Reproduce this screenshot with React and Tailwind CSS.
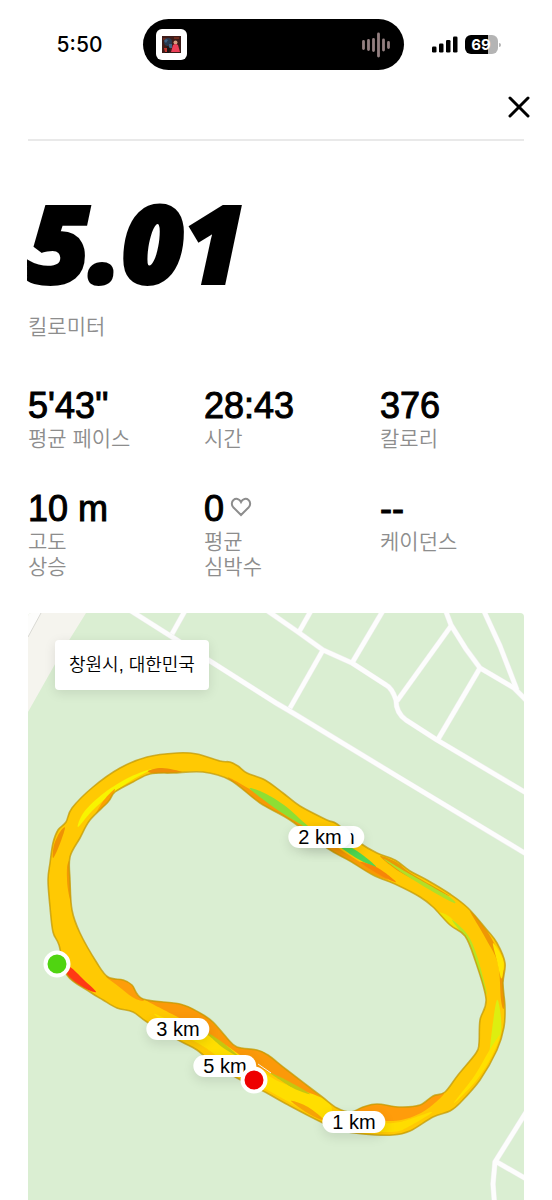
import { X } from "lucide-react";

const MAP = { x: 28, y: 613, width: 496, height: 587 };

const stats = [
  { value: "5'43''", label: ["평균 페이스"] },
  { value: "28:43", label: ["시간"] },
  { value: "376", label: ["칼로리"] },
  { value: "10 m", label: ["고도", "상승"] },
  { value: "0", label: ["평균", "심박수"], heart: true },
  { value: "--", label: ["케이던스"] },
];

const distancePins = [
  { text: "4 km", x: 333, y: 837 },
  { text: "2 km", x: 320, y: 837 },
  { text: "3 km", x: 178, y: 1029 },
  { text: "5 km", x: 225, y: 1066 },
  { text: "1 km", x: 354, y: 1122 },
];

const outerEdge = [
  [177, 753], [197, 754], [220, 761], [230, 762], [238, 766], [247, 773], [265, 780], [283, 793],
  [300, 806], [327, 820], [337, 824], [360, 843], [377, 853], [395, 860], [410, 871], [427, 880],
  [450, 894], [468, 908], [487, 930], [497, 943], [505, 963], [503, 983], [505, 1007], [504, 1027],
  [497, 1050], [480, 1080], [460, 1103], [450, 1111], [433, 1117], [410, 1131], [393, 1135],
  [363, 1134], [340, 1130], [321, 1122], [290, 1106], [263, 1091], [237, 1078], [216, 1066],
  [197, 1050], [180, 1041], [147, 1022], [133, 1012], [117, 1008], [103, 1000], [90, 992],
  [67, 975], [59, 945], [53, 932], [50, 907], [48, 880], [50, 863], [53, 843], [58, 830],
  [66, 822], [72, 808], [93, 787], [120, 768], [147, 757],
];

const innerEdge = [
  [173, 773], [203, 772], [230, 780], [260, 803], [290, 820], [327, 848], [350, 861], [373, 875],
  [397, 885], [420, 897], [433, 907], [450, 925], [465, 936], [475, 960], [486, 999], [480, 1020],
  [479, 1043], [476, 1053], [458, 1075], [445, 1092], [433, 1096], [420, 1105], [400, 1107],
  [377, 1104], [363, 1107], [351, 1112], [337, 1108], [321, 1096], [287, 1070], [268, 1055],
  [257, 1050], [237, 1047], [227, 1038], [213, 1022], [200, 1013], [180, 1004], [143, 999],
  [132, 985], [123, 980], [108, 977], [97, 963], [80, 933], [72, 910], [70, 880], [70, 857],
  [80, 838], [90, 820], [108, 802], [115, 792], [133, 782], [150, 774],
];

// pace changes along the track, drawn on top of the base colour
const paceAreas = [
  { color: "#f8f400", points: [[78, 827], [84, 812], [104, 793], [130, 777], [152, 769], [132, 780], [110, 795], [92, 811]] },
  { color: "#fba004", points: [[96, 814], [104, 800], [115, 789], [108, 803]] },
  { color: "#ef8d07", points: [[148, 771], [162, 768], [182, 772], [172, 774], [156, 774]] },
  { color: "#ef9204", points: [[53, 858], [54, 845], [60, 832], [65, 828], [59, 846]] },
  { color: "#f29a04", points: [[67, 868], [70, 861], [71, 880], [73, 908], [68, 890]] },
  { color: "#f79a06", points: [[228, 778], [246, 787], [284, 810], [328, 841], [352, 857], [388, 879], [368, 872], [330, 850], [290, 820], [260, 803]] },
  { color: "#8ede34", points: [[250, 789], [262, 792], [284, 805], [308, 826], [328, 841], [300, 824], [276, 809]] },
  { color: "#4fd852", points: [[338, 845], [350, 847], [364, 856], [376, 867], [358, 859]] },
  { color: "#f78508", points: [[360, 862], [378, 868], [396, 882], [380, 875]] },
  { color: "#e79a05", points: [[380, 856], [396, 862], [412, 874], [450, 896], [430, 887], [400, 872]] },
  { color: "#b1df27", points: [[384, 859], [408, 873], [448, 896], [454, 903], [430, 890], [404, 874]] },
  { color: "#f1e403", points: [[437, 912], [450, 917], [463, 933], [450, 924]] },
  { color: "#b7e425", points: [[452, 920], [467, 934], [477, 956], [487, 994], [480, 978], [471, 947], [463, 935]] },
  { color: "#ee9605", points: [[470, 911], [487, 931], [500, 957], [505, 983], [504, 1008], [501, 1000], [498, 964], [486, 939]] },
  { color: "#ffe600", points: [[493, 943], [503, 959], [503, 973], [501, 978], [497, 961]] },
  { color: "#ddee10", points: [[497, 1000], [501, 1018], [500, 1037], [490, 1056], [492, 1030]] },
  { color: "#ffe000", points: [[500, 1035], [492, 1056], [476, 1081], [454, 1103], [475, 1075], [489, 1051]] },
  { color: "#ff9c0b", points: [[432, 1097], [444, 1094], [421, 1113], [392, 1121], [358, 1116], [351, 1112], [376, 1104], [402, 1107], [421, 1104]] },
  { color: "#ffdd00", points: [[376, 1124], [400, 1122], [432, 1112], [408, 1127], [392, 1132], [354, 1130]] },
  { color: "#fd9d0a", points: [[106, 976], [123, 980], [133, 986], [144, 1000], [134, 998], [118, 986]] },
  { color: "#fb9909", points: [[144, 998], [180, 1003], [203, 1014], [218, 1028], [228, 1039], [238, 1047], [258, 1050], [269, 1055], [289, 1071], [321, 1098], [301, 1094], [276, 1076], [244, 1061], [223, 1046], [196, 1027], [172, 1014]] },
  { color: "#ffde00", points: [[154, 1014], [174, 1022], [209, 1036], [230, 1048], [252, 1064], [280, 1082], [322, 1098], [332, 1110], [322, 1119], [289, 1102], [259, 1085], [232, 1068], [206, 1048], [180, 1033]] },
  { color: "#c6c60f", points: [[206, 1032], [222, 1042], [238, 1056], [222, 1047]] },
  { color: "#c6c60f", points: [[270, 1073], [288, 1081], [310, 1094], [293, 1088]] },
  { color: "#f7a306", points: [[291, 1101], [308, 1107], [324, 1120], [309, 1114]] },
  { color: "#ff3914", points: [[62, 968], [70, 967], [84, 980], [96, 992], [82, 987], [66, 976]] },
];

const roads = [
  "M128 609 L210 661 L276 703 L288 710 L400 778 L528 855",
  "M262 607 L298 632 L323 650 L352 663 L386 685 Q392 688 396 700 Q396 713 406 720 L437 740 L528 794",
  "M186 609 L172 634",
  "M312 609 L299 632",
  "M323 650 L290 708",
  "M384 609 L352 663",
  "M445 609 L451 625 L466 649 L480 668 L514 688 L528 702",
  "M451 626 L397 701",
  "M480 668 L437 741",
  "M483 609 L500 646 L517 690",
  "M530 1106 L495 1162 L493 1184 L495 1210",
  "M495 1161 L530 1181",
];

// closed Catmull-Rom curve through the points
function curve(points) {
  const n = points.length;
  let d = `M${points[0][0]} ${points[0][1]}`;
  for (let i = 0; i < n; i++) {
    const [p0, p1, p2, p3] = [-1, 0, 1, 2].map((o) => points[(i + o + n) % n]);
    d += `C${p1[0] + (p2[0] - p0[0]) / 6} ${p1[1] + (p2[1] - p0[1]) / 6}`;
    d += ` ${p2[0] - (p3[0] - p1[0]) / 6} ${p2[1] - (p3[1] - p1[1]) / 6}`;
    d += ` ${p2[0]} ${p2[1]}`;
  }
  return d + "Z";
}

function place({ x, y }) {
  return {
    left: `${((x - MAP.x) / MAP.width) * 100}%`,
    top: `${((y - MAP.y) / MAP.height) * 100}%`,
  };
}

function StatusBar() {
  return (
    <div className="grid grid-cols-[1fr_auto_1fr] items-center pt-[19px] pr-[6px]">
      <div className="flex justify-end pr-10 font-['Inter',sans-serif] text-[21px] leading-6 font-medium">
        5:50
      </div>
      <div className="flex h-[51px] w-[261px] items-center justify-between rounded-full bg-black px-[13px]">
        <div className="flex size-[31px] items-center justify-center rounded-md bg-white">
          <svg viewBox="0 0 19 17" className="h-[17px] w-[19px]" aria-hidden="true">
            <rect width="19" height="17" fill="#3d1c19" />
            <path d="M1 2h7v2H1zM12 1h5v2h-5z" fill="#6e2a1c" />
            <circle cx="6" cy="6" r="4" fill="#27394f" />
            <path d="M2 5l2-2 2 1-2 3zM7 8h3v4H7z" fill="#3d6285" />
            <path d="M5 10l3 2-1 5H3z" fill="#1b1716" />
            <path d="M2 12h3v4H3z" fill="#c5342f" />
            <circle cx="13.500" cy="6.500" r="2" fill="#d79c80" />
            <path d="M11 9q2.500-2 5 0l2 7H9z" fill="#ec3f58" />
          </svg>
        </div>
        <svg viewBox="0 0 30 26" className="h-[26px] w-[30px]" aria-hidden="true">
          <g stroke="#937f80" strokeWidth="2.800" strokeLinecap="round">
            <path d="M2.500 9.500v7M7.500 8.500v9M12.500 7.500v11M17.500 2v22M22.500 8v10M27.500 10.500v5" />
          </g>
        </svg>
      </div>
      <div className="flex items-center gap-[7px] pl-7">
        <svg viewBox="0 0 26 17" className="h-[17px] w-[26px]" aria-hidden="true">
          <rect x="0" y="10.500" width="4.500" height="6" rx="1.300" />
          <rect x="7" y="7.500" width="4.500" height="9" rx="1.300" />
          <rect x="14" y="4" width="4.500" height="12.500" rx="1.300" />
          <rect x="21" y="0.500" width="4.500" height="16" rx="1.300" />
        </svg>
        <div className="flex items-center gap-px">
          <div className="flex h-[19px] w-[33px] items-center justify-center rounded-md bg-linear-to-r from-black from-69% to-[#b4b4b4] to-69% font-['Inter',sans-serif] text-[15px] leading-[19px] font-bold text-white">
            69
          </div>
          <div className="h-1 w-0.5 rounded-r-full bg-[#b4b4b4]" />
        </div>
      </div>
    </div>
  );
}

function HeartIcon() {
  return (
    <svg viewBox="0 0 22 20" className="mb-1 h-5 w-[22px]" fill="none" stroke="#8d8d8d" strokeWidth="2" aria-hidden="true">
      <path d="M11 18L3.200 10.200C1.200 8 1.500 4.800 3.500 3C5.800 1 9.300 1.700 11 5C12.700 1.700 16.200 1 18.500 3C20.500 4.800 20.800 8 18.800 10.200Z" />
    </svg>
  );
}

function Stat({ value, label, heart }) {
  return (
    <div>
      <dd className="flex items-center gap-1.5 text-[36px] leading-9 [-webkit-text-stroke:1px_black]">
        {value}
        {heart && <HeartIcon />}
      </dd>
      <dt className="mt-0.5 text-[21px] leading-[25px] font-[350] text-[#8d8d8d]">
        {label.map((line) => (
          <div key={line}>{line}</div>
        ))}
      </dt>
    </div>
  );
}

function RouteMap() {
  const track = curve(outerEdge) + curve(innerEdge);

  return (
    <div className="relative mx-7 mt-[34px] aspect-[496/587] overflow-hidden rounded-t bg-[#daeed2]">
      <svg viewBox={`${MAP.x} ${MAP.y} ${MAP.width} ${MAP.height}`} className="block size-full" aria-hidden="true">
        <path d="M28 613H86L63 650L28 712Z" fill="#f5f4ee" />
        <path d="M28 613H41L28 637Z" fill="#fdfdfc" />
        <path d="M41 613L28 637" stroke="#d9d9d4" strokeWidth="1" />
        <g fill="none" strokeLinejoin="round">
          {roads.map((d) => (
            <path key={d} d={d} stroke="#eceeea" strokeWidth="5.500" />
          ))}
          {roads.map((d) => (
            <path key={d} d={d} stroke="#fdfdfd" strokeWidth="4.500" />
          ))}
        </g>
        <clipPath id="track">
          <path d={track} clipRule="evenodd" />
        </clipPath>
        <path d={track} fill="#ffc903" fillRule="evenodd" />
        <g clipPath="url(#track)">
          {paceAreas.map(({ color, points }, i) => (
            <path key={i} d={curve(points)} fill={color} />
          ))}
        </g>
        <path d={track} fill="none" stroke="#c39a05" strokeOpacity="0.750" strokeWidth="1.600" />
        <path d="M258 1064L271 1073" stroke="#f5f6e8" strokeWidth="1" />
      </svg>
      <div className="absolute top-[27px] left-[27px] rounded bg-white px-[14px] py-3 text-[18px] leading-[26px] font-[350] whitespace-nowrap shadow-[0_3px_12px_rgba(0,0,0,0.100)]">
        창원시, 대한민국
      </div>
      {distancePins.map((pin) => (
        <div
          key={pin.text}
          style={place(pin)}
          className="absolute -translate-x-1/2 -translate-y-1/2 rounded-full bg-white px-[10px] text-[20px] leading-[22px] whitespace-nowrap shadow-[0_4px_12px_rgba(0,0,0,0.100)]"
        >
          {pin.text}
        </div>
      ))}
      <div
        style={place({ x: 57, y: 964 })}
        className="absolute size-[27px] -translate-x-1/2 -translate-y-1/2 rounded-full border-4 border-white bg-[#50d411]"
      />
      <div
        style={place({ x: 254, y: 1080 })}
        className="absolute size-[27px] -translate-x-1/2 -translate-y-1/2 rounded-full border-4 border-white bg-[#ee0000]"
      />
    </div>
  );
}

export default function App() {
  return (
    <main className="bg-white font-['Liberation_Sans','Noto_Sans_CJK_KR',sans-serif] text-black">
      <StatusBar />
      <header className="flex justify-end pt-[19px] pr-[15px] pb-[14px]">
        <button type="button" aria-label="닫기">
          <X size={36} strokeWidth={2} />
        </button>
      </header>
      <hr className="mx-7 border-t-2 border-[#e9e9e9]" />
      <section className="px-7">
        <h1 className="mt-[53px] font-['Open_Sans',sans-serif] text-[106px] leading-[96px] font-extrabold italic [-webkit-text-stroke:4px_black]">
          5.01
        </h1>
        <p className="mt-6 text-[21px] leading-[25px] font-[350] text-[#8d8d8d]">킬로미터</p>
        <dl className="mt-[49px] grid grid-cols-3 gap-x-8 gap-y-10">
          {stats.map((stat) => (
            <Stat key={stat.label[0] + stat.value} {...stat} />
          ))}
        </dl>
      </section>
      <RouteMap />
    </main>
  );
}
